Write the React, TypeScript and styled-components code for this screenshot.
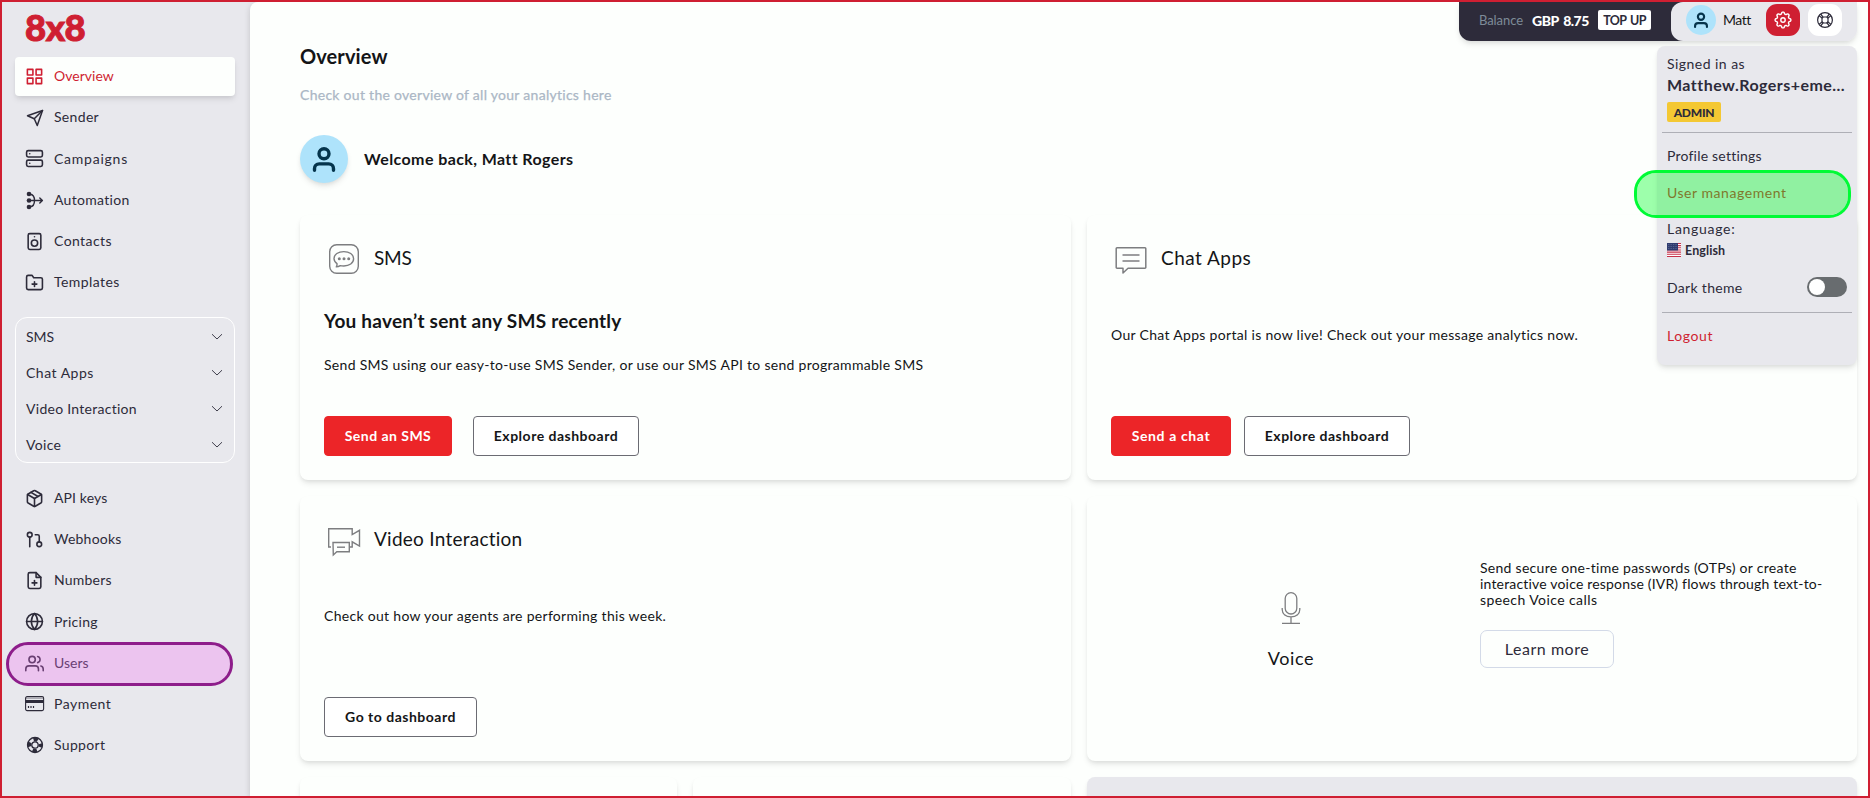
import React from 'react';
import styled, { createGlobalStyle, css } from 'styled-components';
import {
  FiGrid, FiSend, FiServer, FiSpeaker, FiFolderPlus, FiPackage,
  FiGitPullRequest, FiFilePlus, FiGlobe, FiUsers,
} from 'react-icons/fi';

const c = {
  red: '#cf1f32',
  action: '#ec2528',
  grey: '#e8e8ed',
  ink: '#2d2b3a',
  black: '#141517',
  surface: '#fdfffd',
  sky: '#aee3fb',
  navy: '#05344c',
};

const shadow = '0 4px 6px -1px rgba(0,0,0,.1), 0 2px 4px -1px rgba(0,0,0,.06)';

const Global = createGlobalStyle`
  *, *::before, *::after { box-sizing: border-box; }
  body { margin: 0; overflow: hidden; font-family: Lato, "Liberation Sans", sans-serif; font-size: 14px; color: ${c.ink}; }
  h1, h2, h3, p { margin: 0; font: inherit; }
  button { font: inherit; padding: 0; cursor: pointer; }
`;

type Spaced = { $ls?: number };
const spaced = css<Spaced>`letter-spacing: ${p => p.$ls ?? 0.25}px; white-space: nowrap;`;
const Label = styled.span<Spaced>`${spaced}`;

const Page = styled.div`
  position: relative; display: flex; height: 798px; overflow: hidden;
  border: 2px solid ${c.red}; background: ${c.grey};
`;

/* Sidebar */
const Sidebar = styled.aside`width: 248px; flex: none; padding: 0 15px 0 13px; display: flex; flex-direction: column;`;
const Logo = styled.div`
  height: 55px; padding: 0 0 5px 10px; display: flex; align-items: center;
  color: ${c.red}; font-size: 36.5px; line-height: 1; font-weight: 900; letter-spacing: -.5px;
  -webkit-text-stroke: 1px ${c.red};
`;
const NavLink = styled.div<{ $active?: boolean }>`
  height: 39px; margin-bottom: 2.2px; flex: none; display: flex; align-items: center; padding-left: 9px;
  border-radius: 4px; color: ${p => (p.$active ? c.red : 'inherit')};
  ${p => p.$active && css`background: ${c.surface}; box-shadow: ${shadow};`}
`;
const NavText = styled(Label)`padding-bottom: 1.500px;`;
const NavIcon = styled.span`width: 21px; height: 20px; margin-right: 9px; display: flex; align-items: center; justify-content: center;
  svg { flex: none; }`;
const Products = styled.div`
  height: 146px; margin: 12.700px 0 16px; flex: none; display: flex; flex-direction: column;
  border: 1px solid #fff; border-radius: 12px;
`;
const Product = styled.div`height: 36px; display: flex; align-items: center; justify-content: space-between; padding: 2px 11px 0 10px;`;

/* Main */
const Main = styled.main`
  flex: 1; min-width: 0; padding: 0 11px 0 50px; background: ${c.surface};
  border-radius: 8px 0 0 0; box-shadow: 0 2px 6px rgba(0,0,0,.16); overflow: hidden;
`;
const Title = styled.h1<Spaced>`height: 26px; margin-top: 42px; line-height: 25px; font-size: 20px; font-weight: 700; color: ${c.black}; ${spaced}`;
const Subtitle = styled.p<Spaced>`height: 20px; margin-top: 15px; line-height: 20px; color: #abb7c5; -webkit-text-stroke: .25px #abb7c5; ${spaced}`;
const Welcome = styled.div`display: flex; align-items: center; gap: 16px; margin: 30px 0 32px;`;
const Avatar = styled.div<{ $size: number }>`
  width: ${p => p.$size}px; height: ${p => p.$size}px; border-radius: 50%; flex: none;
  display: flex; align-items: center; justify-content: center; background: ${c.sky}; color: ${c.navy};
`;
const WelcomeAvatar = styled(Avatar)`box-shadow: ${shadow};`;
const WelcomeText = styled.p<Spaced>`font-size: 16px; font-weight: 700; color: ${c.black}; padding-bottom: 1px; ${spaced}`;

const Grid = styled.div`display: grid; grid-template-columns: 771px 770px; grid-template-rows: 265px 265px 265px; gap: 16px;`;
const Card = styled.section<{ $muted?: boolean }>`
  display: flex; flex-direction: column; padding: 22px 24px 24px; border-radius: 8px; box-shadow: ${shadow}; color: ${c.black};
  background: ${p => (p.$muted ? c.grey : c.surface)};
`;
const SplitRow = styled.div`display: grid; grid-template-columns: 377px 378px; gap: 16px;`;
const CardHead = styled.header`display: flex; align-items: center; gap: 10px; height: 42px;`;
const CardTitle = styled.h2<Spaced>`font-size: 19px; padding-bottom: 2px; ${spaced}`;
const CardBody = styled.div`flex: 1; display: flex; flex-direction: column; padding-top: 29px;`;
const Headline = styled.h3<Spaced>`font-size: 19px; font-weight: 700; line-height: 26px; margin-bottom: 21px; ${spaced}`;
const Copy = styled.p<Spaced & { $top?: number }>`line-height: 20px; margin-top: ${p => p.$top ?? 0}px; ${spaced}`;
const Actions = styled.div<{ $gap: number }>`display: flex; gap: ${p => p.$gap}px;`;
const Button = styled.button<Spaced & { $primary?: boolean; $w: number }>`
  width: ${p => p.$w}px; height: 40px; padding-bottom: 2px; border-radius: 4px; font-weight: 700;
  border: 1px solid ${p => (p.$primary ? c.action : '#6b6b73')};
  background: ${p => (p.$primary ? c.action : '#fff')}; color: ${p => (p.$primary ? '#fff' : c.black)};
  ${spaced}
`;
const VoiceCard = styled(Card)`flex-direction: row; align-items: flex-start; padding: 0;`;
const VoiceBrand = styled.div`width: 408px; padding-top: 94px; display: flex; flex-direction: column; align-items: center; gap: 20px; font-size: 18px; line-height: 24px;`;
const VoiceInfo = styled.div`flex: 1; margin-left: -15px; padding-top: 64px; line-height: 16px;`;
const VoiceLine = styled.p<Spaced>`${spaced}`;
const Learn = styled.button<Spaced>`
  width: 134px; height: 38px; margin-top: 22px; font-size: 16px; color: ${c.ink};
  background: transparent; border: 1px solid #d3dae8; border-radius: 7px; ${spaced}
`;

/* Account bar */
const AccountBar = styled.div`
  position: absolute; top: 0; right: 11px; height: 39px; display: flex; color: #fff;
  border-radius: 0 0 12px 12px; background: linear-gradient(to right, ${c.ink} 60%, ${c.grey} 60%); box-shadow: ${shadow};
`;
const BalanceBox = styled.div`width: 212px; display: flex; align-items: center; padding: 0 0 3px 20px;`;
const BalanceName = styled(Label)`width: 53px; font-size: 13px; color: #7e8b98;`;
const BalanceValue = styled(Label)`width: 66px; font-weight: 900; word-spacing: 2px;`;
const TopUp = styled.button<Spaced>`
  width: 53px; height: 20px; border: 0; border-radius: 2px; background: #fff; color: ${c.ink};
  font-size: 12.5px; font-weight: 700; word-spacing: 1.500px; ${spaced}
`;
const UserBox = styled.div`
  width: 186px; display: flex; align-items: center; padding: 0 15px 3px 15px;
  border-radius: 12px 0 12px 12px; background: ${c.grey}; color: ${c.black};
`;
const UserName = styled(Label)`width: 43px; flex: none; margin-left: 7px; padding-bottom: 1px;`;
const IconButton = styled.button<{ $primary?: boolean }>`
  width: 34px; height: 32px; flex: none; border: 0; border-radius: 11px; display: flex; align-items: center; justify-content: center;
  background: ${p => (p.$primary ? c.red : '#fff')}; color: ${p => (p.$primary ? '#fff' : c.ink)};
  & + & { margin-left: 8px; }
`;

/* Account menu */
const Menu = styled.div`
  position: absolute; top: 44px; right: 11px; width: 200px; height: 319px; padding: 8px 5px 0;
  display: flex; flex-direction: column; border-radius: 8px; background: ${c.grey}; box-shadow: ${shadow};
`;
const MenuRow = styled.div<Spaced & { $h: number; $red?: boolean; $lift?: number }>`
  height: ${p => p.$h}px; flex: none; padding: 0 5px ${p => p.$lift ?? 2}px; display: flex; align-items: center;
  color: ${p => (p.$red ? c.red : 'inherit')}; ${spaced}
`;
const Account = styled(MenuRow)`font-size: 16px; font-weight: 700;`;
const Badge = styled.span<Spaced>`
  width: 54px; height: 20px; margin: 5px 0 10px 5px; flex: none; display: flex; align-items: center; justify-content: center;
  border-radius: 2px; background: #f4c833; font-size: 12px; font-weight: 900; ${spaced}
`;
const Rule = styled.hr`width: 190px; height: 1px; margin: 0; border: 0; background: #aeafb6; flex: none;`;
const Language = styled(MenuRow)`padding: 0 5px; font-size: 12.5px; font-weight: 700; gap: 4px;`;
const ThemeRow = styled(MenuRow)`justify-content: space-between; margin-top: 12px; padding-bottom: 0;`;
const Toggle = styled.span`width: 40px; height: 20px; padding: 2px; border-radius: 10px; background: #686c6f;
  &::after { content: ''; display: block; width: 16px; height: 16px; border-radius: 50%; background: #fff; }`;

const Marker = styled.div<{ $x: number; $y: number; $w: number; $h: number; $line: string; $fill: string }>`
  position: absolute; left: ${p => p.$x}px; top: ${p => p.$y}px; width: ${p => p.$w}px; height: ${p => p.$h}px;
  border: 3px solid ${p => p.$line}; border-radius: 22px; background: ${p => p.$fill}; background-clip: padding-box; pointer-events: none;
`;

const PersonIcon = ({ size }: { size: number }) => (
  <svg width={size} height={size} viewBox="0 0 48 48" fill="none" stroke="currentColor" strokeWidth="3.400" strokeLinecap="round">
    <circle cx="24" cy="18.800" r="5" /><path d="M14.500 35.200v-1.500c0-3 2-4.800 4.800-4.800h9.400c2.800 0 4.800 1.800 4.800 4.800v1.500" />
  </svg>
);
const Chevron = () => (
  <svg width="12" height="8" viewBox="0 0 12 8" fill="none" stroke="currentColor" strokeWidth="0.9"><path d="M1 1.200 6 6 11 1.200" /></svg>
);
const AutomationIcon = () => (
  <svg width="19" height="19" viewBox="0 0 19 19" fill="none" stroke="currentColor" strokeWidth="1.4" strokeLinecap="round" strokeLinejoin="round">
    <g fill="currentColor" stroke="none"><circle cx="4" cy="3" r="2.3" /><circle cx="4" cy="9.5" r="2.3" /><circle cx="4" cy="16" r="2.3" /></g>
    <path d="M4 9.5h13M14.8 7l2.6 2.5-2.6 2.5M5 3.2c3.3.3 4.5 2.500 4.500 6.300S8.300 15.500 5 15.800" />
  </svg>
);
const CardIcon = () => (
  <svg width="20" height="16" viewBox="0 0 20 16" fill="none" stroke="currentColor">
    <rect x=".6" y=".6" width="18" height="14" rx="1.500" strokeWidth="1.100" />
    <path d="M.6 5.500h18" strokeWidth="3" /><path d="M.6 2.300h18" strokeWidth=".8" opacity=".5" />
    <path d="M3.500 10v2M6 10v2M8.500 10v2" strokeWidth="1.200" />
  </svg>
);
const SupportIcon = () => (
  <svg width="18" height="18" viewBox="0 0 18 18" fill="none" stroke="currentColor">
    <circle cx="9" cy="9" r="7.500" strokeWidth="1.300" /><circle cx="9" cy="9" r="3.200" strokeWidth="1.300" />
    <circle cx="9" cy="9" r="5.600" strokeWidth="3.800" strokeDasharray="4.4 4.396" strokeDashoffset="2.200" />
  </svg>
);
const BuoyIcon = () => (
  <svg width="18" height="18" viewBox="0 0 18 18" fill="none" stroke="currentColor" strokeWidth="1.200">
    <circle cx="9" cy="9" r="7.400" /><rect x="6" y="6" width="6" height="6" rx="2" />
    <path d="M3 4.600 6.300 7.300M4.600 3 7.300 6.300M15 4.600 11.700 7.300M13.400 3 10.700 6.300M3 13.400 6.300 10.700M4.600 15 7.300 11.700M15 13.400 11.700 10.700M13.400 15 10.700 11.700" />
  </svg>
);
const gearPath = Array.from({ length: 96 }, (_, i) => {
  const a = (i / 96) * Math.PI * 2;
  const r = 7 + 0.95 * Math.tanh(1.8 * Math.cos(8 * a));
  return `${i ? 'L' : 'M'}${(9 + r * Math.cos(a)).toFixed(2)} ${(9 + r * Math.sin(a)).toFixed(2)}`;
}).join('') + 'Z';
const GearIcon = () => (
  <svg width="18" height="18" viewBox="0 0 18 18" fill="none" stroke="currentColor" strokeWidth="1.400" strokeLinejoin="round">
    <path d={gearPath} /><circle cx="9" cy="9" r="2.200" />
  </svg>
);
const SmsIcon = () => (
  <svg width="40" height="40" viewBox="0 0 40 40" fill="none" stroke="#7d7e80" strokeWidth="1.400">
    <rect x="5.700" y="6.700" width="28.600" height="28.600" rx="7" />
    <path d="M13 25.600c-1.900-1.300-3-3-3-5 0-4.200 4.300-7 9.800-7s9.800 2.800 9.800 7.200-4.300 7.200-9.800 7.200c-1.300 0-2.500-.1-3.500-.4-1.300.8-2.600 1.200-4 1.300.6-1 .8-2 .7-3.300Z" strokeLinejoin="round" />
    <g fill="#7d7e80" stroke="none"><circle cx="15.300" cy="20.700" r="1.500" /><circle cx="20" cy="20.700" r="1.500" /><circle cx="24.700" cy="20.700" r="1.500" /></g>
  </svg>
);
const ChatIcon = () => (
  <svg width="40" height="40" viewBox="0 0 40 40" fill="none" stroke="#7d7e80" strokeWidth="1.500" strokeLinejoin="round">
    <path d="M6 9.700h28a.8.8 0 0 1 .8.8v19a.8.8 0 0 1-.8.8H17l-5 4.700v-4.700H6a.8.8 0 0 1-.8-.8v-19a.8.8 0 0 1 .8-.8Z" />
    <path d="M11.500 16.900h17M11.500 23h17" />
  </svg>
);
const VideoIcon = () => (
  <svg width="40" height="40" viewBox="0 0 40 40" fill="none" stroke="#7d7e80" strokeWidth="1.400">
    <path d="M7 28H4.700V9.800h23.500v5.700l7.300-4.200V27l-7.300-4.200V28h-2.500" />
    <path d="M9 23.500h16.300v9.300H12.800L9.300 36Z" /><path d="M13 28.200h8" />
  </svg>
);
const MicIcon = () => (
  <svg width="22" height="36" viewBox="0 0 22 36" fill="none" stroke="#7d7e80" strokeWidth="1.300">
    <rect x="5.200" y="2.700" width="11.600" height="21.300" rx="5.800" />
    <path d="M2.200 18v1.500c0 4.700 3.900 7.300 8.800 7.300s8.800-2.600 8.800-7.300V18M11 26.800v6.400M2 33.400h18" />
  </svg>
);
const Flag = () => (
  <svg width="14" height="14" viewBox="0 0 14 14">
    <rect width="14" height="14" fill="#fff" />
    <path d="M0 .5h14M0 2.650h14M0 4.800h14M0 6.950h14M0 9.100h14M0 11.250h14M0 13.500h14" stroke="#c8314a" strokeWidth="1.080" />
    <rect width="11" height="7.500" fill="#2f3c70" />
    <path d="M1 1.500h9M1 3.500h9M1 5.500h9" stroke="#8c95b5" strokeWidth=".6" strokeDasharray=".7 1" />
  </svg>
);

type NavEntry = { label: string; ls: number; icon: React.ReactNode; active?: boolean };
const topNav: NavEntry[] = [
  { label: 'Overview', ls: 0.02, icon: <FiGrid size={19} />, active: true },
  { label: 'Sender', ls: 0.32, icon: <FiSend size={18} /> },
  { label: 'Campaigns', ls: 0.76, icon: <FiServer size={19} /> },
  { label: 'Automation', ls: 0.3, icon: <AutomationIcon /> },
  { label: 'Contacts', ls: 0.42, icon: <FiSpeaker size={19} /> },
  { label: 'Templates', ls: 0.42, icon: <FiFolderPlus size={19} /> },
];
const products = [
  { label: 'SMS', ls: -0.06 }, { label: 'Chat Apps', ls: 0.5 },
  { label: 'Video Interaction', ls: 0.27 }, { label: 'Voice', ls: 0.3 },
];
const lowerNav: NavEntry[] = [
  { label: 'API keys', ls: 0.11, icon: <FiPackage size={19} /> },
  { label: 'Webhooks', ls: 0.22, icon: <FiGitPullRequest size={19} /> },
  { label: 'Numbers', ls: 0.22, icon: <FiFilePlus size={19} /> },
  { label: 'Pricing', ls: 0.28, icon: <FiGlobe size={19} /> },
  { label: 'Users', ls: 0, icon: <FiUsers size={19} /> },
  { label: 'Payment', ls: 0.5, icon: <CardIcon /> },
  { label: 'Support', ls: 0.32, icon: <SupportIcon /> },
];

const Nav = ({ items }: { items: NavEntry[] }) => (
  <>
    {items.map(i => (
      <NavLink key={i.label} $active={i.active}>
        <NavIcon>{i.icon}</NavIcon>
        <NavText $ls={i.ls}>{i.label}</NavText>
      </NavLink>
    ))}
  </>
);

export default function App() {
  return (
    <>
      <Global />
      <Page>
        <Sidebar>
          <Logo>8x8</Logo>
          <Nav items={topNav} />
          <Products>
            {products.map(p => (
              <Product key={p.label}><NavText $ls={p.ls}>{p.label}</NavText><Chevron /></Product>
            ))}
          </Products>
          <Nav items={lowerNav} />
        </Sidebar>

        <Main>
          <Title $ls={0.1}>Overview</Title>
          <Subtitle $ls={0.28}>Check out the overview of all your analytics here</Subtitle>
          <Welcome>
            <WelcomeAvatar $size={48}><PersonIcon size={48} /></WelcomeAvatar>
            <WelcomeText $ls={0.4}>Welcome back, Matt Rogers</WelcomeText>
          </Welcome>
          <Grid>
            <Card>
              <CardHead><SmsIcon /><CardTitle $ls={-0.2}>SMS</CardTitle></CardHead>
              <CardBody>
                <Headline $ls={0.24}>You haven’t sent any SMS recently</Headline>
                <Copy $ls={0.295}>Send SMS using our easy-to-use SMS Sender, or use our SMS API to send programmable SMS</Copy>
              </CardBody>
              <Actions $gap={21}>
                <Button $primary $w={128} $ls={0.47}>Send an SMS</Button>
                <Button $w={166} $ls={0.5}>Explore dashboard</Button>
              </Actions>
            </Card>
            <Card>
              <CardHead><ChatIcon /><CardTitle $ls={0.48}>Chat Apps</CardTitle></CardHead>
              <CardBody><Copy $top={17} $ls={0.31}>Our Chat Apps portal is now live! Check out your message analytics now.</Copy></CardBody>
              <Actions $gap={13}>
                <Button $primary $w={120} $ls={0.62}>Send a chat</Button>
                <Button $w={166} $ls={0.5}>Explore dashboard</Button>
              </Actions>
            </Card>
            <Card>
              <CardHead><VideoIcon /><CardTitle $ls={0.25}>Video Interaction</CardTitle></CardHead>
              <CardBody><Copy $top={17} $ls={0.3}>Check out how your agents are performing this week.</Copy></CardBody>
              <Actions $gap={13}><Button $w={153} $ls={0.5}>Go to dashboard</Button></Actions>
            </Card>
            <VoiceCard>
              <VoiceBrand><MicIcon /><Label $ls={0.6}>Voice</Label></VoiceBrand>
              <VoiceInfo>
                <VoiceLine $ls={0.28}>Send secure one-time passwords (OTPs) or create</VoiceLine>
                <VoiceLine $ls={0.18}>interactive voice response (IVR) flows through text-to-</VoiceLine>
                <VoiceLine $ls={0.42}>speech Voice calls</VoiceLine>
                <Learn $ls={0.55}>Learn more</Learn>
              </VoiceInfo>
            </VoiceCard>
            <SplitRow><Card /><Card /></SplitRow>
            <Card $muted />
          </Grid>
        </Main>

        <AccountBar>
          <BalanceBox>
            <BalanceName $ls={-0.07}>Balance</BalanceName>
            <BalanceValue $ls={-0.5}>GBP 8.75</BalanceValue>
            <TopUp $ls={-0.6}>TOP UP</TopUp>
          </BalanceBox>
          <UserBox>
            <Avatar $size={30}><PersonIcon size={32} /></Avatar>
            <UserName $ls={-0.5}>Matt</UserName>
            <IconButton $primary><GearIcon /></IconButton>
            <IconButton><BuoyIcon /></IconButton>
          </UserBox>
        </AccountBar>

        <Menu>
          <MenuRow $h={20} $ls={0.46}>Signed in as</MenuRow>
          <Account $h={23} $ls={0.46} $lift={1.5}>Matthew.Rogers+eme…</Account>
          <Badge $ls={-0.25}>ADMIN</Badge>
          <Rule />
          <MenuRow $h={45} $ls={0.21} $lift={0}>Profile settings</MenuRow>
          <MenuRow $h={30} $ls={0.55} $red>User management</MenuRow>
          <MenuRow $h={42} $ls={0.7}>Language:</MenuRow>
          <Language $h={0} $ls={0.1}><Flag />English</Language>
          <ThemeRow $h={50} $ls={0.32}><Label $ls={0.32}>Dark theme</Label><Toggle /></ThemeRow>
          <Rule />
          <MenuRow $h={46} $ls={0.58} $red>Logout</MenuRow>
        </Menu>

        <Marker $x={4} $y={640} $w={227} $h={44} $line="#8e1d8b" $fill="rgba(245,112,244,.3)" />
        <Marker $x={1632} $y={168} $w={217} $h={48} $line="#00fb35" $fill="rgba(0,254,36,.38)" />
      </Page>
    </>
  );
}
